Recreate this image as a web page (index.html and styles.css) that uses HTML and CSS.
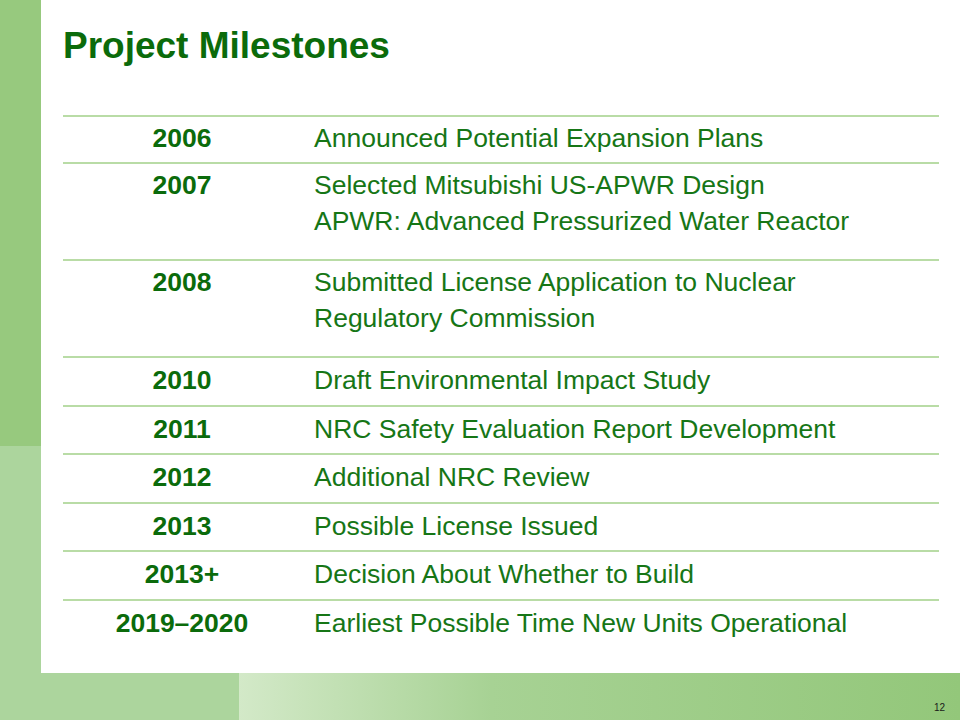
FILE: index.html
```html
<!DOCTYPE html>
<html>
<head>
<meta charset="utf-8">
<link rel="stylesheet" href="styles.css">
</head>
<body>
<div class="slide">
  <div class="side">
    <div class="side-top"></div>
    <div class="side-bottom"></div>
  </div>
  <main class="panel">
    <h1 class="title">Project Milestones</h1>
    <div class="table">
      <div class="row"><div class="year">2006</div><div class="desc">Announced Potential Expansion Plans</div></div>
      <div class="row tall"><div class="year">2007</div><div class="desc">Selected Mitsubishi US-APWR Design<br>APWR: Advanced Pressurized Water Reactor</div></div>
      <div class="row tall"><div class="year">2008</div><div class="desc">Submitted License Application to Nuclear<br>Regulatory Commission</div></div>
      <div class="row short"><div class="year">2010</div><div class="desc">Draft Environmental Impact Study</div></div>
      <div class="row short"><div class="year">2011</div><div class="desc">NRC Safety Evaluation Report Development</div></div>
      <div class="row short"><div class="year">2012</div><div class="desc">Additional NRC Review</div></div>
      <div class="row short"><div class="year">2013</div><div class="desc">Possible License Issued</div></div>
      <div class="row short"><div class="year">2013+</div><div class="desc">Decision About Whether to Build</div></div>
      <div class="row short"><div class="year">2019–2020</div><div class="desc">Earliest Possible Time New Units Operational</div></div>
    </div>
  </main>
  <footer class="footer">
    <div class="foot-left"></div>
    <div class="foot-right"><span class="pageno">12</span></div>
  </footer>
</div>
</body>
</html>
```
FILE: styles.css
```css
html, body {
  margin: 0;
  padding: 0;
  background: #ffffff;
}
.slide {
  width: 960px;
  height: 720px;
  display: grid;
  grid-template-columns: 41px 1fr;
  grid-template-rows: 673px 47px;
  font-family: "Liberation Sans", Arial, sans-serif;
}
.side {
  display: flex;
  flex-direction: column;
}
.side-top {
  height: 446px;
  background: #97c97e;
}
.side-bottom {
  flex: 1;
  background: #acd59d;
}
.panel {
  background: #ffffff;
  padding: 0 21px 0 22px;
}
.title {
  margin: 0;
  padding-top: 23px;
  height: 115px;
  box-sizing: border-box;
  font-size: 37px;
  line-height: 46px;
  font-weight: bold;
  color: #0b6b0b;
}
.row {
  display: grid;
  grid-template-columns: 238px 1fr;
  border-top: 2px solid #b9dca6;
  padding: 3px 0 6px;
  font-size: 26.5px;
  line-height: 36px;
  color: #0b6b0b;
}
.row.tall {
  padding-bottom: 20px;
}
.row.short {
  padding-top: 4px;
  padding-bottom: 6.5px;
}
.year {
  font-weight: bold;
  text-align: center;
}
.desc {
  padding-left: 13px;
  color: #167616;
  white-space: nowrap;
}
.footer {
  grid-column: 1 / 3;
  display: flex;
}
.foot-left {
  width: 239px;
  background: #acd59d;
}
.foot-right {
  flex: 1;
  background: linear-gradient(to right, #d3e9c8 0%, #a7d294 35%, #93c77a 100%);
  display: flex;
  justify-content: flex-end;
  align-items: flex-end;
  padding: 0 15px 6px 0;
}
.pageno {
  font-size: 10px;
  color: #1a1a1a;
  line-height: 12px;
}
```
